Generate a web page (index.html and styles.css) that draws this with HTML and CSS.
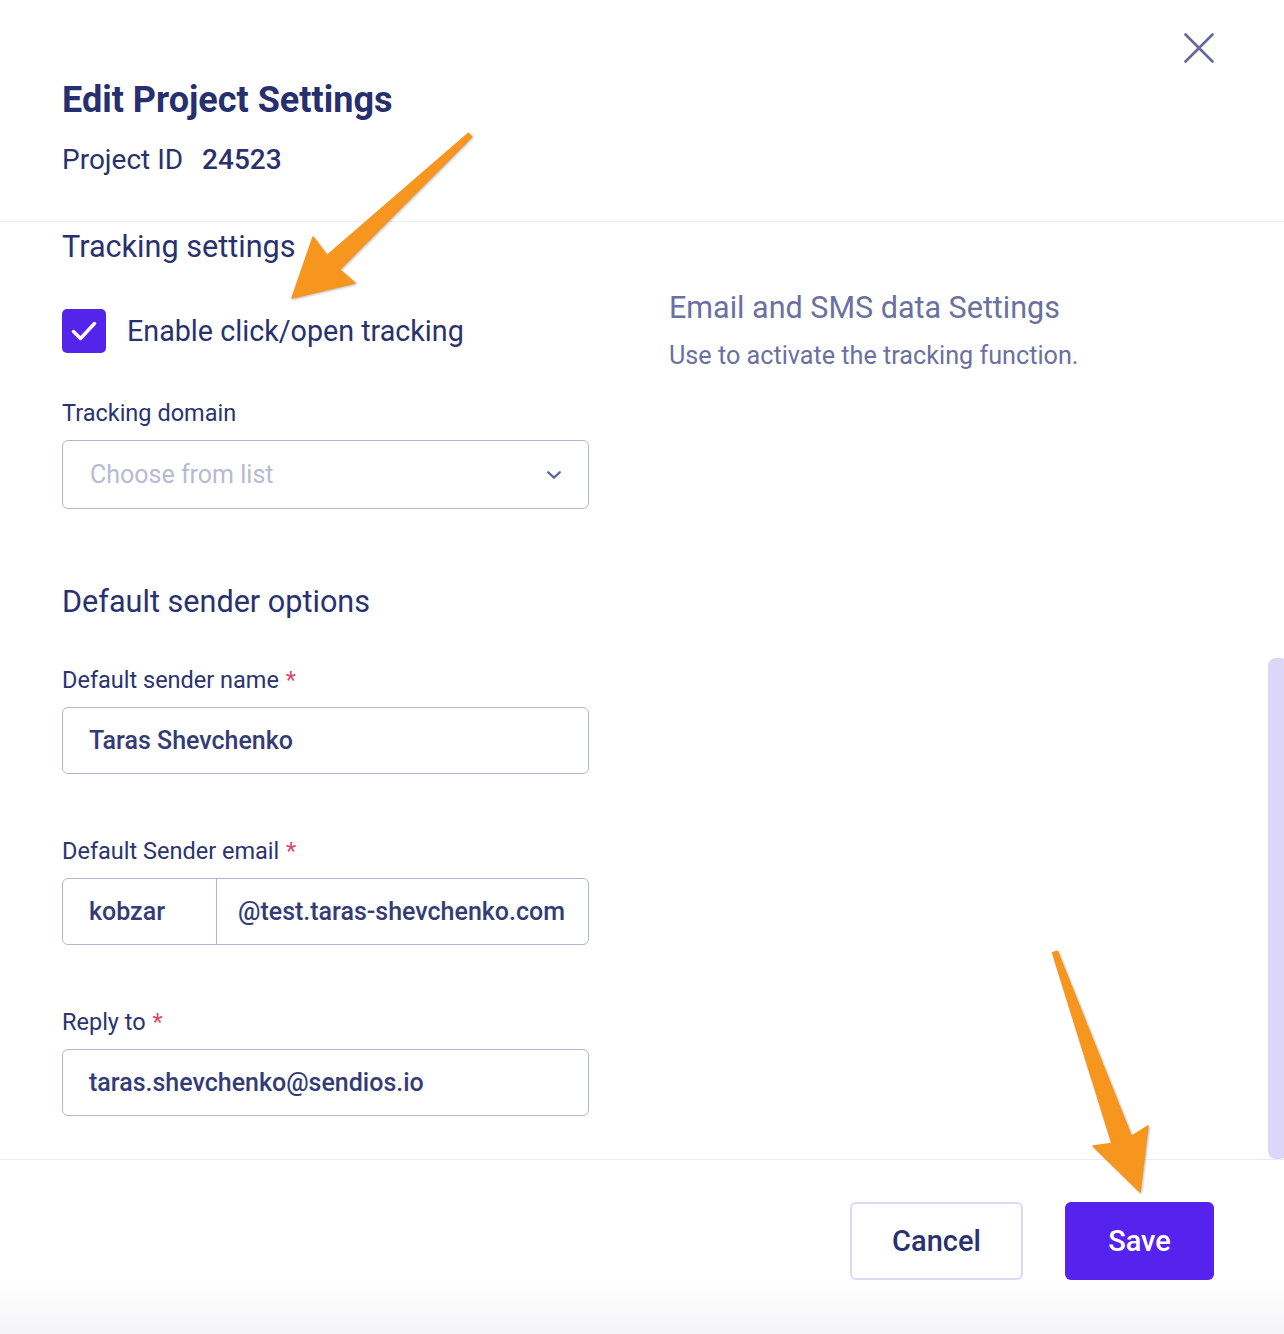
FILE: index.html
```html
<!DOCTYPE html>
<html lang="en">
<head>
<meta charset="utf-8">
<title>Edit Project Settings</title>
<link rel="stylesheet" href="styles.css">
</head>
<body>
<div class="modal">
  <header class="modal-header">
    <div class="heading-block">
      <h1 class="title">Edit Project Settings</h1>
      <p class="project-id">Project ID <span class="project-num">24523</span></p>
    </div>
    <button class="close-btn" aria-label="Close">
      <svg width="30" height="30" viewBox="0 0 30 30"><path d="M1.5 1.5 L28.5 28.5 M28.5 1.5 L1.5 28.5" stroke="#636a95" stroke-width="2.6" stroke-linecap="round" fill="none"/></svg>
    </button>
  </header>

  <main class="modal-body">
    <section class="col-left">
      <h2 class="section-title">Tracking settings</h2>
      <label class="check-row">
        <span class="checkbox">
          <svg width="44" height="44" viewBox="0 0 44 44"><path d="M11.5 22.5 L18.5 29.5 L32.5 14.5" stroke="#fff" stroke-width="3.4" stroke-linecap="round" stroke-linejoin="round" fill="none"/></svg>
        </span>
        <span class="check-label">Enable click/open tracking</span>
      </label>

      <div class="field field-first">
        <div class="field-label">Tracking domain</div>
        <div class="select">
          <span class="placeholder">Choose from list</span>
          <svg class="chevron" width="14" height="8" viewBox="0 0 14 8"><path d="M1.2 1.2 L7 6.6 L12.8 1.2" stroke="#5a6092" stroke-width="2.2" stroke-linecap="round" stroke-linejoin="round" fill="none"/></svg>
        </div>
      </div>

      <h2 class="section-title section-gap">Default sender options</h2>

      <div class="field field-first">
        <div class="field-label">Default sender name <span class="req">*</span></div>
        <div class="input">Taras Shevchenko</div>
      </div>

      <div class="field">
        <div class="field-label">Default Sender email <span class="req">*</span></div>
        <div class="input split">
          <span class="split-left">kobzar</span>
          <span class="split-right">@test.taras-shevchenko.com</span>
        </div>
      </div>

      <div class="field">
        <div class="field-label">Reply to <span class="req">*</span></div>
        <div class="input">taras.shevchenko@sendios.io</div>
      </div>
    </section>

    <section class="col-right">
      <h3 class="info-title">Email and SMS data Settings</h3>
      <p class="info-text">Use to activate the tracking function.</p>
    </section>

    <div class="scroll-thumb"></div>
  </main>

  <footer class="modal-footer">
    <button class="btn btn-cancel">Cancel</button>
    <button class="btn btn-save">Save</button>
  </footer>

  <svg class="annotations" width="1284" height="1334" viewBox="0 0 1284 1334">
    <g fill="#f7961e" stroke="#f7961e" stroke-width="1.5" stroke-linejoin="round">
      <polygon points="468.3,133.2 327,255.5 313,237 292,298 355,283 339.5,269.5 471.7,136.8"/>
      <polygon points="1057.4,951.2 1131.5,1136.5 1148,1126 1140,1192 1093,1146 1112,1143.5 1052.6,952.8"/>
    </g>
  </svg>
</div>
</body>
</html>
```

FILE: styles.css
```css
* { box-sizing: border-box; }

html, body {
  margin: 0;
  padding: 0;
  background: #ffffff;
}

body {
  font-family: Roboto, "Liberation Sans", Arial, sans-serif;
  color: #29316f;
  width: 1284px;
  height: 1334px;
  overflow: hidden;
}

.modal {
  position: relative;
  width: 1284px;
  height: 1334px;
  display: flex;
  flex-direction: column;
  background: #fff;
}

/* Header */
.modal-header {
  display: flex;
  justify-content: space-between;
  align-items: flex-start;
  padding: 33px 70px 44px 62px;
  border-bottom: 1px solid #ebeafa;
  flex: none;
}

.title {
  margin: 46px 0 0;
  font-size: 36px;
  line-height: 42px;
  font-weight: 700;
  color: #272f6e;
}

.project-id {
  margin: 22px 0 0;
  font-size: 28px;
  line-height: 34px;
  font-weight: 400;
  color: #29316f;
}

.project-num {
  font-weight: 500;
  margin-left: 12px;
}

.close-btn {
  width: 30px;
  height: 30px;
  padding: 0;
  border: 0;
  background: none;
  display: block;
}
.close-btn svg { display: block; }

/* Body */
.modal-body {
  position: relative;
  flex: 1;
  display: flex;
  gap: 80px;
  padding: 7px 0 0 62px;
  overflow: hidden;
}

.col-left {
  width: 527px;
  flex: none;
}

.section-title {
  margin: 0;
  font-size: 30.6px;
  line-height: 36px;
  font-weight: 400;
  color: #29316f;
}

.section-gap { margin-top: 75px; }

.check-row {
  display: flex;
  align-items: center;
  gap: 21px;
  margin-top: 44px;
  height: 44px;
}

.checkbox {
  width: 44px;
  height: 44px;
  border-radius: 5px;
  background: #5424ea;
  flex: none;
}
.checkbox svg { display: block; }

.check-label {
  font-size: 28.7px;
  line-height: 36px;
  color: #29316f;
}

.field { margin-top: 63px; }
.field-first { margin-top: 46px; }

.field-label {
  font-size: 23.5px;
  line-height: 28px;
  color: #2b3370;
  margin-bottom: 13px;
}

.req { color: #d8486d; margin-left: 1px; }

.select {
  height: 69px;
  border: 1px solid #b2b6d2;
  border-radius: 6px;
  display: flex;
  align-items: center;
  justify-content: space-between;
  padding: 0 27px 0 27px;
}

.placeholder {
  font-size: 25px;
  color: #b6bad4;
}

.chevron { display: block; margin-top: 0; }

.input {
  height: 67px;
  border: 1px solid #b2b6d2;
  border-radius: 6px;
  display: flex;
  align-items: center;
  padding: 0 26px;
  font-size: 25px;
  font-weight: 500;
  color: #343c77;
}

.input.split { padding: 0; }

.split-left {
  width: 154px;
  height: 100%;
  display: flex;
  align-items: center;
  padding-left: 26px;
  border-right: 1px solid #b2b6d2;
}

.split-right {
  padding-left: 21px;
}

.col-right {
  padding-top: 61px;
}

.info-title {
  margin: 0;
  font-size: 30.5px;
  line-height: 36px;
  font-weight: 400;
  color: #6a70a0;
}

.info-text {
  margin: 16px 0 0;
  font-size: 25.2px;
  line-height: 28px;
  color: #6a70a0;
}

.scroll-thumb {
  position: absolute;
  top: 436px;
  left: 1268px;
  width: 20px;
  height: 501px;
  border-radius: 8px;
  background: #dcd7f8;
}

/* Footer */
.modal-footer {
  flex: none;
  height: 175px;
  border-top: 1px solid #ebeafa;
  display: flex;
  justify-content: flex-end;
  align-items: flex-start;
  gap: 42px;
  padding: 42px 70px 0 0;
  background: linear-gradient(to bottom, #ffffff 0%, #ffffff 70%, #f4f4f6 100%);
}

.btn {
  height: 78px;
  border-radius: 6px;
  font-family: Roboto, "Liberation Sans", Arial, sans-serif;
  font-size: 29px;
  font-weight: 500;
  cursor: pointer;
}

.btn-cancel {
  width: 173px;
  background: #fff;
  border: 2px solid #dcd9f4;
  color: #29316f;
}

.btn-save {
  width: 149px;
  background: #5523ed;
  border: 0;
  color: #ffffff;
}

/* Annotation arrows */
.annotations {
  position: absolute;
  top: 0;
  left: 0;
  pointer-events: none;
  filter: drop-shadow(1px 1px 1px rgba(60, 60, 60, 0.35));
}
```
